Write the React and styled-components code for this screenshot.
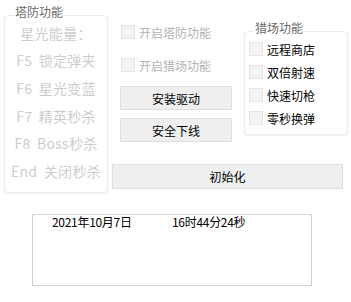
import React from "react";
import styled, { createGlobalStyle } from "styled-components";

const Global = createGlobalStyle`
  html, body { margin: 0; padding: 0; background: #ffffff; }
  body { font-family: "Noto Sans CJK SC", "Noto Sans", sans-serif; }
  * { box-sizing: border-box; }
`;

const Page = styled.div`
  width: 351px;
  height: 302px;
  display: flex;
  flex-direction: column;
`;

const Top = styled.div`
  display: flex;
  align-items: flex-start;
`;

const Group = styled.div`
  position: relative;
  margin-left: ${(p) => p.$ml}px;
  margin-top: ${(p) => p.$mt}px;
  width: ${(p) => p.$w}px;
  height: ${(p) => p.$h}px;
  border: 1px solid #ebebeb;
  border-radius: 4px;
  box-shadow: 0 1px 2px rgba(0, 0, 0, 0.07);
  background: #fff;
  display: flex;
  flex-direction: column;
  padding: ${(p) => p.$pad};
`;

const Caption = styled.span`
  position: absolute;
  left: ${(p) => p.$left}px;
  top: -11px;
  padding: 0 1px;
  background: #fff;
  color: #6a6a6a;
  font-size: 12px;
  line-height: 14px;
`;

const HotkeyRow = styled.div`
  height: 27.6px;
  display: flex;
  align-items: center;
  justify-content: center;
  font-size: 14px;
  color: #cdcdcd;
  white-space: pre;
  word-spacing: 3px;
  letter-spacing: 0.3px;
`;

const RightArea = styled.div`
  margin-left: 4px;
  display: flex;
  flex-direction: column;
`;

const RightTop = styled.div`
  display: flex;
  align-items: flex-start;
`;

const MiddleCol = styled.div`
  margin-left: 8px;
  padding-top: 25px;
  width: 112px;
  display: flex;
  flex-direction: column;
`;

const CheckRow = styled.label`
  display: flex;
  align-items: center;
  height: 14px;
  margin-top: ${(p) => p.$mt || 0}px;
  font-size: 12px;
  color: ${(p) => (p.$disabled ? "#b3b3b3" : "#000")};
  white-space: nowrap;
`;

const Box = styled.span`
  width: 14px;
  height: 14px;
  margin-left: ${(p) => p.$ml || 0}px;
  margin-right: 4px;
  border: 1px solid #e4e4e4;
  background: #f4f4f4;
  flex: none;
`;

const Button = styled.div`
  height: ${(p) => p.$h}px;
  width: ${(p) => p.$w}px;
  margin-top: ${(p) => p.$mt}px;
  border: 1px solid #dedede;
  background: #efefef;
  display: flex;
  align-items: center;
  justify-content: center;
  font-size: 12px;
  color: #000;
`;

const LogBox = styled.div`
  margin-left: 32px;
  margin-top: 21px;
  width: 280px;
  height: 72px;
  border: 1px solid #d2d2d2;
  padding: 0 0 0 19px;
  display: flex;
  align-items: flex-start;
  font-size: 12px;
  line-height: 14px;
  color: #000;
`;

const LogItem = styled.span`
  width: ${(p) => p.$w || "auto"};
  white-space: nowrap;
  letter-spacing: -0.3px;
`;

const hotkeys = ["星光能量：", "F5 锁定弹夹", "F6 星光变蓝", "F7 精英秒杀", "F8 Boss秒杀", "End 关闭秒杀"];
const hunt = ["远程商店", "双倍射速", "快速切枪", "零秒换弹"];

export default function App() {
  return (
    <Page>
      <Global />
      <Top>
        <Group $ml={4} $mt={15} $w={104} $h={178} $pad="3px 0 0 0">
          <Caption $left={9}>塔防功能</Caption>
          {hotkeys.map((t) => (
            <HotkeyRow key={t}>{t}</HotkeyRow>
          ))}
        </Group>
        <RightArea>
          <RightTop>
            <MiddleCol>
              <CheckRow $disabled>
                <Box $ml={1} />
                开启塔防功能
              </CheckRow>
              <CheckRow $disabled $mt={19}>
                <Box $ml={1} />
                开启猎场功能
              </CheckRow>
              <Button $w={112} $h={24} $mt={14}>安装驱动</Button>
              <Button $w={112} $h={24} $mt={8}>安全下线</Button>
            </MiddleCol>
            <Group $ml={12} $mt={31} $w={104} $h={104} $pad="10px 0 0 4px">
              <Caption $left={9}>猎场功能</Caption>
              {hunt.map((t, i) => (
                <CheckRow key={t} $mt={i === 0 ? 0 : 9}>
                  <Box />
                  {t}
                </CheckRow>
              ))}
            </Group>
          </RightTop>
          <Button $w={231} $h={25} $mt={22}>初始化</Button>
        </RightArea>
      </Top>
      <LogBox>
        <LogItem $w="120px">2021年10月7日</LogItem>
        <LogItem>16时44分24秒</LogItem>
      </LogBox>
    </Page>
  );
}
